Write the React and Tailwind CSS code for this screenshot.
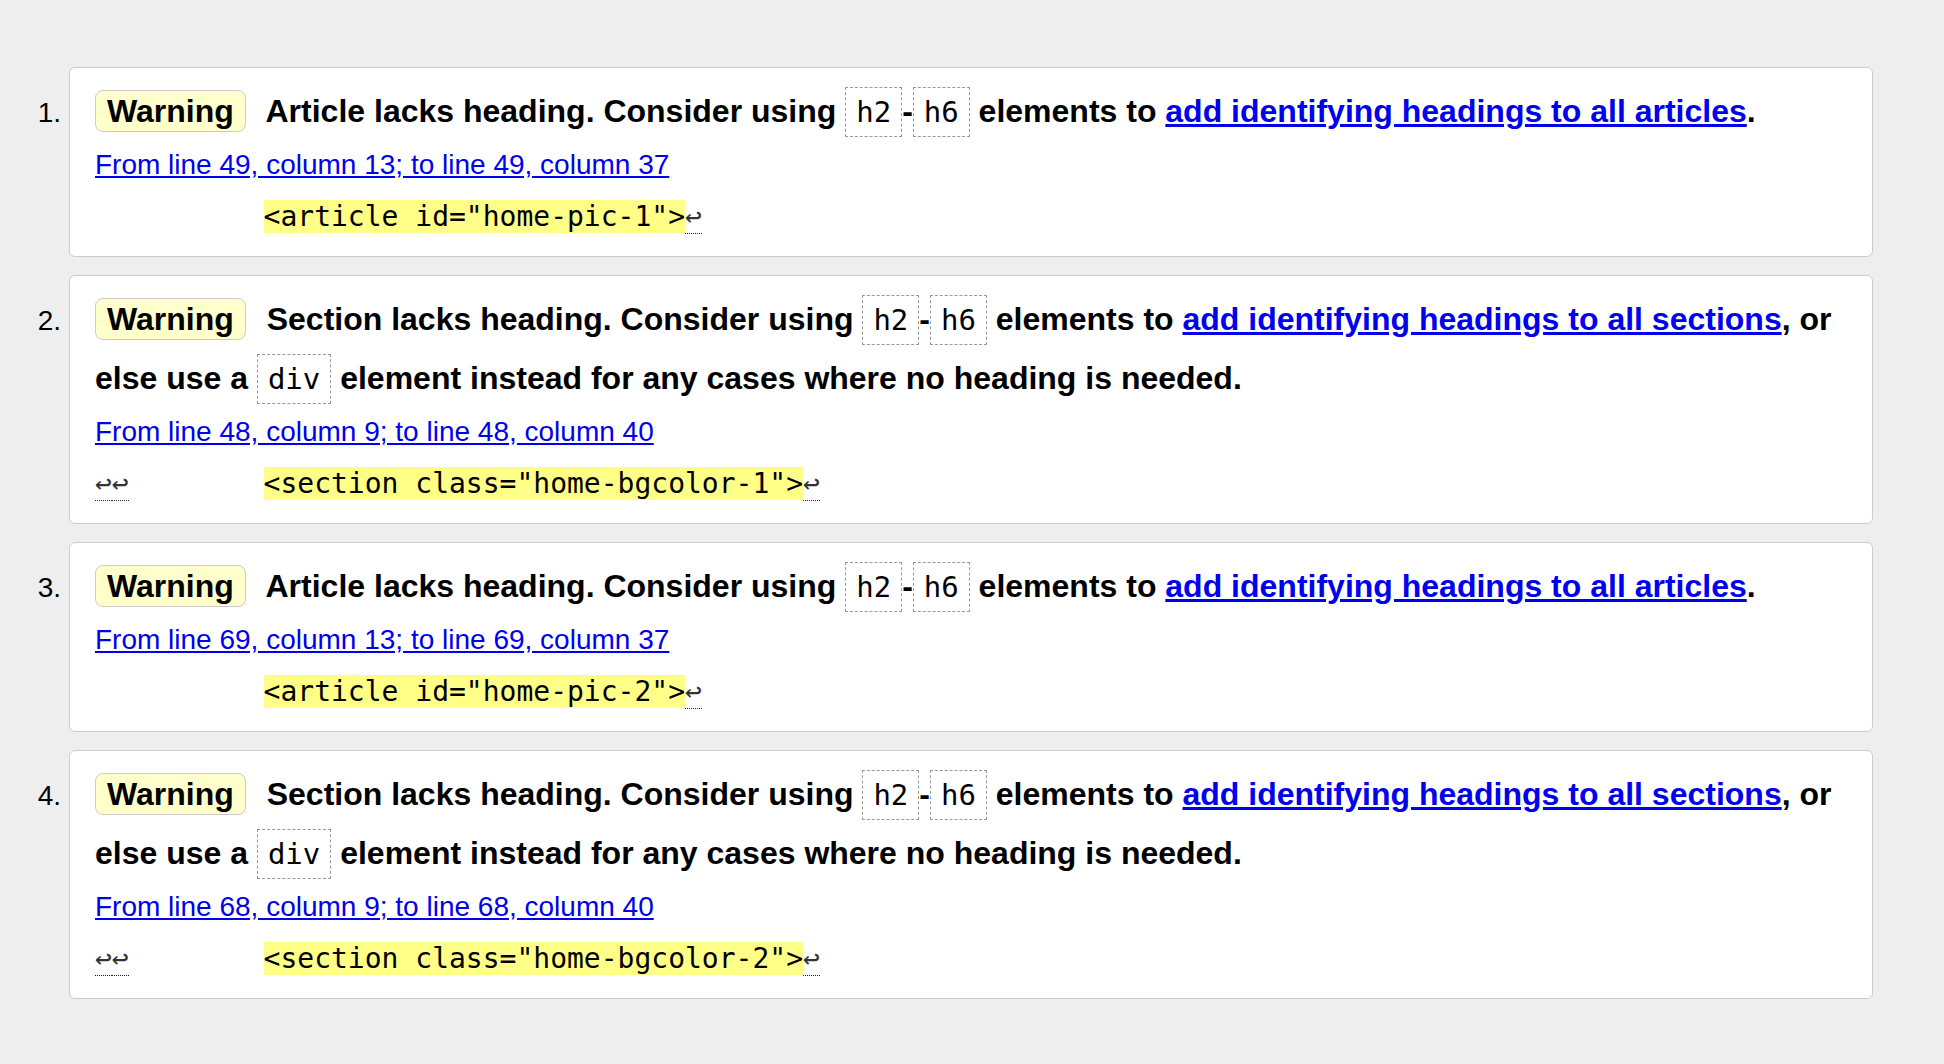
import React from "react";

const Code = ({ children }) => (
  <span className="border border-dashed border-[#999999] px-[10px] py-[7px] font-['DejaVu_Sans_Mono',Menlo,monospace] text-[29px] font-normal leading-none">
    {children}
  </span>
);

const Lf = () => (
  <span className="text-[#333333] border-b border-dotted border-[#222222]">↩</span>
);

const Badge = () => (
  <span className="mr-[12px] rounded-[8px] border border-[#cccccc] bg-[#ffffcc] px-[11px] py-[2px]">
    Warning
  </span>
);

const LinkA = ({ children }) => (
  <a href="#" className="text-[#0000ee] underline">
    {children}
  </a>
);

const items = [
  {
    kind: "article",
    from: "From line 49, column 13; to line 49, column 37",
    code: '<article id="home-pic-1">',
  },
  {
    kind: "section",
    from: "From line 48, column 9; to line 48, column 40",
    code: '<section class="home-bgcolor-1">',
  },
  {
    kind: "article",
    from: "From line 69, column 13; to line 69, column 37",
    code: '<article id="home-pic-2">',
  },
  {
    kind: "section",
    from: "From line 68, column 9; to line 68, column 40",
    code: '<section class="home-bgcolor-2">',
  },
];

function Message({ kind }) {
  if (kind === "article") {
    return (
      <p className="text-[32px] font-bold leading-[59px] text-black">
        <Badge /> Article lacks heading. Consider using <Code>h2</Code>-<Code>h6</Code> elements to{" "}
        <LinkA>add identifying headings to all articles</LinkA>.
      </p>
    );
  }
  return (
    <p className="text-[32px] font-bold leading-[59px] text-black">
      <Badge /> Section lacks heading. Consider using <Code>h2</Code>-<Code>h6</Code> elements to{" "}
      <LinkA>add identifying headings to all sections</LinkA>, or else use a <Code>div</Code> element
      instead for any cases where no heading is needed.
    </p>
  );
}

export default function App() {
  return (
    <div className="min-h-screen bg-[#eeeeee] pt-[67px] pb-[60px] font-['Liberation_Sans',Arial,sans-serif] text-black">
      <ol className="flex flex-col gap-[18px] pr-[71px]">
        {items.map((it, i) => (
          <li key={i} className="flex items-baseline">
            <span className="w-[69px] shrink-0 pr-[8px] text-right text-[28px]">{i + 1}.</span>
            <div className="flex-1 rounded-[6px] border border-[#cccccc] bg-white px-[25px] pt-[14px] pb-[23px]">
              <Message kind={it.kind} />
              <p className="mt-[8px] text-[28px] leading-[32px]">
                <LinkA>{it.from}</LinkA>
              </p>
              <p className="mt-[19px] whitespace-pre font-['DejaVu_Sans_Mono',Menlo,monospace] text-[28px] leading-[33px]">
                {it.kind === "section" ? (
                  <>
                    <Lf />
                    <Lf />
                    {"        "}
                  </>
                ) : (
                  "          "
                )}
                <span className="bg-[#ffff88]">{it.code}</span>
                <Lf />
              </p>
            </div>
          </li>
        ))}
      </ol>
    </div>
  );
}
